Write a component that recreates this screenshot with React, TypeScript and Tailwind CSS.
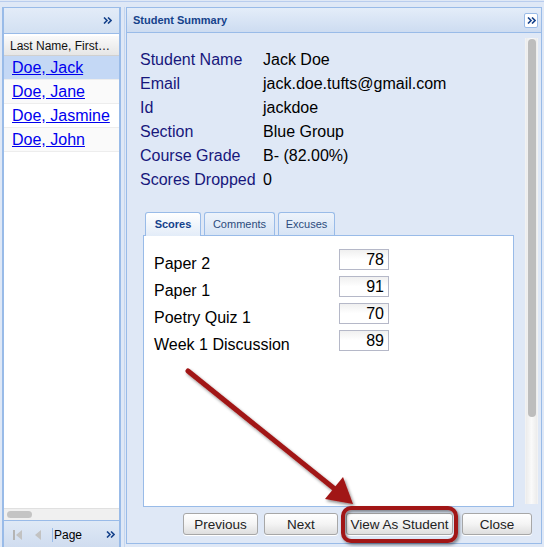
import React from "react";

const F = { fontFamily: '"Liberation Sans", Arial, sans-serif' };

function Chevrons({ className = "" }: { className?: string }) {
  return (
    <svg width="9" height="7" viewBox="0 0 9 7" className={className}>
      <path d="M1 0.5 L4 3.5 L1 6.5 M5 0.5 L8 3.5 L5 6.5" fill="none" stroke="#15428b" strokeWidth="1.6" />
    </svg>
  );
}

const info: [string, string][] = [
  ["Student Name", "Jack Doe"],
  ["Email", "jack.doe.tufts@gmail.com"],
  ["Id", "jackdoe"],
  ["Section", "Blue Group"],
  ["Course Grade", "B- (82.00%)"],
  ["Scores Dropped", "0"],
];

const scores: [string, string][] = [
  ["Paper 2", "78"],
  ["Paper 1", "91"],
  ["Poetry Quiz 1", "70"],
  ["Week 1 Discussion", "89"],
];

const students = ["Doe, Jack", "Doe, Jane", "Doe, Jasmine", "Doe, John"];

function Btn({ label, w, ml }: { label: string; w: string; ml: string }) {
  return (
    <div
      className={`${w} ${ml} h-[22px] rounded-[3px] border border-[#a7a7a7] bg-gradient-to-b from-[#ffffff] via-[#f4f4f4] to-[#dedede] flex items-center justify-center pt-[2px] text-[13.5px] text-[#222] shadow-[0_1px_0_#fff]`}
    >
      {label}
    </div>
  );
}

export default function App() {
  return (
    <div className="relative w-[544px] h-[547px] overflow-hidden bg-[#dfe8f6]" style={F}>
      <div className="h-[1px] mt-[1px] bg-[#b9cdee]" />
      <div className="flex pt-[5px] pl-[2px]">
        {/* Left panel */}
        <div className="w-[119px] h-[541px] border-l-2 border-r-2 border-t border-[#99bbe8] flex flex-col bg-white">
          <div className="h-[26px] border-b border-[#99bbe8] bg-gradient-to-b from-[#e3ecf8] to-[#d2e0f2] flex items-center justify-end pr-[7px]">
            <Chevrons />
          </div>
          <div className="flex-1 flex flex-col pt-[2px]">
            <div className="h-[20px] border-b border-[#d0d0d0] bg-gradient-to-b from-[#fafafa] to-[#e6e6e6] flex items-center pl-[6px] text-[12px] text-[#111] whitespace-nowrap overflow-hidden">
              Last Name, First…
            </div>
            {students.map((s, i) => (
              <div
                key={s}
                className={`h-[24px] flex items-center pl-[8px] border-b border-[#ededed] ${
                  i === 0 ? "bg-[#c4d8f5]" : i % 2 === 1 ? "bg-[#fafafa]" : "bg-white"
                }`}
              >
                <span className="text-[16px] text-[#0000ee] underline pt-[1px]">{s}</span>
              </div>
            ))}
            <div className="flex-1" />
            <div className="h-[12px] bg-[#f0f0f0] border-t border-[#e0e0e0] relative">
              <div className="absolute left-[3px] top-[2px] w-[25px] h-[7px] rounded-full bg-[#c4c4c4]" />
            </div>
          </div>
          <div className="h-[28px] border-t border-[#99bbe8] bg-gradient-to-b from-[#dfe9f6] to-[#cfdcef] flex items-center text-[12px]">
            <svg width="12" height="12" viewBox="0 0 12 12" className="ml-[8px]">
              <rect x="1" y="1" width="2" height="10" fill="#b4b4b4" />
              <path d="M10 1 L4 6 L10 11 Z" fill="#c2c2c2" />
            </svg>
            <svg width="8" height="12" viewBox="0 0 8 12" className="ml-[10px]">
              <path d="M7 1 L1 6 L7 11 Z" fill="#c2c2c2" />
            </svg>
            <div className="ml-[10px] w-[1px] h-[14px] bg-[#99bbe8]" />
            <span className="ml-[1px] text-black">Page</span>
            <Chevrons className="ml-[24px]" />
          </div>
        </div>

        {/* Right panel */}
        <div className="ml-[3px] border-l border-[#c5d6ef] pl-[1px]">
          <div className="w-[416px] h-[537px] border border-[#99bbe8] flex flex-col">
            <div className="h-[25px] border-b border-[#99bbe8] bg-gradient-to-b from-[#e4edf9] to-[#cddcf1] flex items-center justify-between pl-[6px] pr-[3px]">
              <span className="text-[11px] font-bold text-[#15428b]">Student Summary</span>
              <div className="w-[14px] h-[15px] rounded-[2px] border border-[#99bbe8] bg-white flex items-center justify-center">
                <Chevrons />
              </div>
            </div>
            <div className="flex-1 flex flex-col bg-[#dfe8f6]">
              <div className="h-[474px] flex">
                <div className="w-[387px] flex flex-col pt-[15px] pl-[16px]">
                  <div className="-ml-[3px]">
                    {info.map(([k, v]) => (
                      <div key={k} className="h-[24px] flex items-center text-[16px]">
                        <span className="w-[123px] text-[#17177c]">{k}</span>
                        <span className="text-black">{v}</span>
                      </div>
                    ))}
                  </div>
                  <div className="mt-[20px] flex-1 flex flex-col">
                    <div className="h-[24px] flex items-end pl-[2px] gap-[3px] border-b border-[#99bbe8]">
                      <div className="w-[56px] h-[24px] rounded-t-[3px] border border-b-0 border-[#99bbe8] bg-gradient-to-b from-[#ffffff] to-[#e3ecf8] flex items-center justify-center text-[11px] font-bold text-[#15428b] relative top-[1px]">
                        Scores
                      </div>
                      <div className="w-[71px] h-[23px] rounded-t-[3px] border border-b-0 border-[#99bbe8] bg-gradient-to-b from-[#edf3fb] to-[#d7e4f5] flex items-center justify-center text-[11px] text-[#2c4b7c]">
                        Comments
                      </div>
                      <div className="w-[57px] h-[23px] rounded-t-[3px] border border-b-0 border-[#99bbe8] bg-gradient-to-b from-[#edf3fb] to-[#d7e4f5] flex items-center justify-center text-[11px] text-[#2c4b7c]">
                        Excuses
                      </div>
                    </div>
                    <div className="flex-1 w-[371px] bg-white border border-t-0 border-[#99bbe8] pt-[13px] pl-[10px] flex flex-col gap-[6px]">
                      {scores.map(([k, v]) => (
                        <div key={k} className="h-[21px] flex items-center text-[16px] text-black">
                          <span className="w-[185px] pt-[8px]">{k}</span>
                          <div className="w-[50px] h-[21px] border border-[#b5b8c8] bg-gradient-to-b from-[#f0f0f0] via-white to-white text-right pr-[4px] leading-[19px]">
                            {v}
                          </div>
                        </div>
                      ))}
                    </div>
                  </div>
                </div>
                <div className="ml-[11px] mt-[5px] w-[13px] h-[466px] bg-gradient-to-r from-[#ececec] via-[#fafafa] to-[#ececec] border-x border-[#f2f2f2] flex justify-center pt-[1px]">
                  <div className="w-[8px] h-[378px] rounded-full bg-[#bdbdbd]" />
                </div>
              </div>
              <div className="flex pt-[6px] pl-[56px]">
                <Btn label="Previous" w="w-[75px]" ml="ml-0" />
                <Btn label="Next" w="w-[74px]" ml="ml-[6px]" />
                <Btn label="View As Student" w="w-[107px]" ml="ml-[8px]" />
                <Btn label="Close" w="w-[70px]" ml="ml-[9px]" />
              </div>
            </div>
          </div>
        </div>
      </div>

      {/* Annotation overlay */}
      <svg className="absolute inset-0 pointer-events-none" width="544" height="547" viewBox="0 0 544 547">
        <defs>
          <filter id="sh" x="-20%" y="-20%" width="140%" height="140%">
            <feDropShadow dx="1.5" dy="2" stdDeviation="1.5" floodColor="#000" floodOpacity="0.45" />
          </filter>
        </defs>
        <g filter="url(#sh)">
          <line x1="188" y1="371" x2="336" y2="490" stroke="#a11616" strokeWidth="5" strokeLinecap="round" />
          <path d="M353 504 L325 499 L343 477 Z" fill="#a11616" />
          <rect x="343" y="508" width="113" height="33" rx="8" ry="8" fill="none" stroke="#a11616" strokeWidth="4" />
        </g>
      </svg>
    </div>
  );
}
